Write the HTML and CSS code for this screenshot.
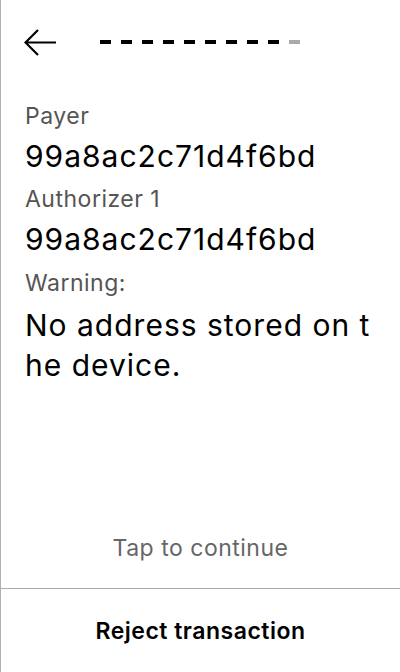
FILE: index.html
```html
<!DOCTYPE html>
<html>
<head>
<meta charset="utf-8">
<link rel="stylesheet" href="styles.css">
</head>
<body>
<div class="screen">
  <header class="header">
    <svg class="back" width="34" height="28" viewBox="0 0 34 28">
      <path d="M14 1 L1.5 13.5 L14 26 M1.5 13.5 H32" fill="none" stroke="#000" stroke-width="2.2"/>
    </svg>
    <div class="progress">
      <span class="dash"></span><span class="dash"></span><span class="dash"></span><span class="dash"></span><span class="dash"></span><span class="dash"></span><span class="dash"></span><span class="dash"></span><span class="dash"></span><span class="dash dash-off"></span>
    </div>
  </header>
  <main class="content">
    <div class="label">Payer</div>
    <div class="value">99a8ac2c71d4f6bd</div>
    <div class="label">Authorizer 1</div>
    <div class="value value-last">99a8ac2c71d4f6bd</div>
    <div class="label">Warning:</div>
    <div class="message">No address stored on t<br>he device.</div>
  </main>
  <div class="tap">Tap to continue</div>
  <button class="reject">Reject transaction</button>
</div>
</body>
</html>
```
FILE: styles.css
```css
html, body {
  margin: 0;
  padding: 0;
  background: #fff;
}
.screen {
  box-sizing: border-box;
  width: 400px;
  height: 672px;
  border-left: 1px solid #b0b0b0;
  display: flex;
  flex-direction: column;
  font-family: Inter, "Noto Sans", sans-serif;
  color: #000;
}
.header {
  display: flex;
  align-items: center;
  height: 28px;
  padding: 29px 0 0 23px;
}
.back {
  display: block;
}
.progress {
  display: flex;
  gap: 10px;
  margin-left: 42px;
  margin-top: -3px;
}
.dash {
  width: 11px;
  height: 4px;
  background: #000;
}
.dash-off {
  background: #aaa;
}
.content {
  padding: 39px 0 0 24px;
}
.label {
  font-size: 23px;
  line-height: 40px;
  letter-spacing: 0.5px;
  color: #555;
}
.value {
  font-size: 30px;
  line-height: 40px;
  letter-spacing: 1px;
  margin-bottom: 3px;
}
.value-last {
  margin-bottom: 4px;
}
.message {
  font-size: 30px;
  line-height: 40px;
  letter-spacing: 1px;
  margin-top: 2px;
}
.tap {
  margin-top: auto;
  text-align: center;
  font-size: 23px;
  line-height: 24px;
  letter-spacing: 0.5px;
  color: #666;
  padding-bottom: 28px;
}
.reject {
  display: block;
  width: 100%;
  height: 84px;
  border: 0;
  border-top: 1px solid #aaa;
  background: #fff;
  font-family: Inter, "Noto Sans", sans-serif;
  font-size: 23px;
  font-weight: 600;
  letter-spacing: 0.5px;
  color: #000;
  padding: 0;
}
```
